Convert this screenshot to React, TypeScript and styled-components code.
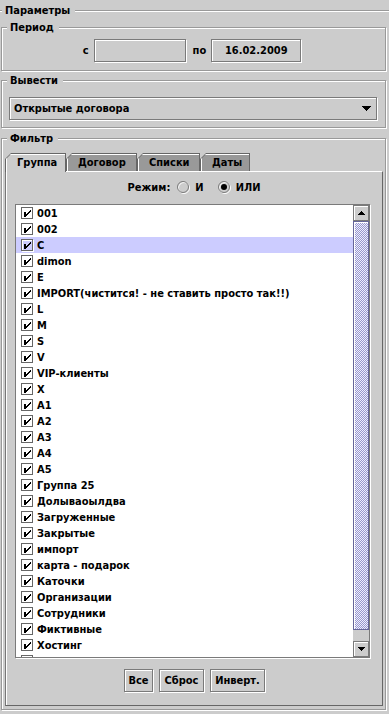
import React from "react";
import styled, { createGlobalStyle, css } from "styled-components";

const GlobalStyle = createGlobalStyle`
  html, body { margin: 0; padding: 0; background: #cccccc; }
  #root { width: 389px; height: 714px; }
`;

const flush3d = css`
  border: 1px solid #7a7a7a;
  box-shadow: inset 1px 1px 0 #ffffff, 1px 1px 0 #ffffff;
`;

const etched = css`
  border: 1px solid #999999;
  box-shadow: inset 1px 1px 0 #ffffff, 1px 1px 0 #ffffff;
`;

const Window = styled.div`
  box-sizing: border-box;
  width: 389px;
  height: 714px;
  padding-top: 4px;
  background: #cccccc;
  color: #000000;
  font: bold 11px "DejaVu Sans Condensed", "DejaVu Sans", "Liberation Sans", sans-serif;
  overflow: hidden;
`;

const Params = styled.fieldset`
  margin: 0;
  padding: 0;
  min-width: 0;
  border: none;
  border-top: 1px solid #999999;
  box-shadow: inset 0 1px 0 #ffffff;
`;

const Legend = styled.legend<{ $indent: number }>`
  margin-left: ${(p) => p.$indent}px;
  padding: 0 5px 0 3px;
  line-height: 13px;
  background: #cccccc;
  white-space: nowrap;
`;

const Group = styled.fieldset<{ $top: number }>`
  box-sizing: border-box;
  width: 385px;
  min-width: 0;
  margin: ${(p) => p.$top}px 0 0 1px;
  padding: 0;
  ${etched}
`;

const PeriodRow = styled.div`
  display: flex;
  justify-content: center;
  align-items: center;
  gap: 5px;
  padding: 5px 3px 8px 0;
`;

const Caption = styled.span<{ $gap?: number }>`
  margin-left: ${(p) => p.$gap ?? 0}px;
`;

const DateField = styled.div<{ $width: number }>`
  box-sizing: border-box;
  width: ${(p) => p.$width}px;
  height: 23px;
  display: flex;
  align-items: center;
  justify-content: center;
  background: #cccccc;
  ${flush3d}
`;

const OutputBody = styled.div`
  padding: 10px 8px 7px 7px;
`;

const Combo = styled.div`
  box-sizing: border-box;
  height: 23px;
  display: flex;
  align-items: center;
  justify-content: space-between;
  padding: 0 5px 0 4px;
  background: #cccccc;
  ${flush3d}
`;

const FilterBody = styled.div`
  padding: 8px 2px 3px 3px;
`;

const TabStrip = styled.div`
  display: flex;
  align-items: flex-start;
  height: 18px;
`;

const TabEdge = styled.div<{ $selected: boolean; $width: number }>`
  position: relative;
  z-index: ${(p) => (p.$selected ? 1 : 0)};
  box-sizing: border-box;
  width: ${(p) => p.$width}px;
  height: ${(p) => (p.$selected ? 19 : 18)}px;
  padding: 1px 1px 0 1px;
  background: #666666;
  clip-path: polygon(0 100%, 0 6px, 6px 0, 100% 0, 100% 100%);
`;

const TabFace = styled.div<{ $selected: boolean }>`
  height: 100%;
  display: flex;
  align-items: center;
  padding: 0 0 ${(p) => (p.$selected ? 1 : 0)}px 11px;
  box-sizing: border-box;
  background: ${(p) => (p.$selected ? "#cccccc" : "#999999")};
  box-shadow: inset 1px 1px 0 #ffffff;
  clip-path: polygon(0 100%, 0 5px, 5px 0, 100% 0, 100% 100%);
`;

const TabPanel = styled.div`
  box-sizing: border-box;
  border-top: 1px solid #ffffff;
  border-left: 1px solid #777777;
  border-right: 1px solid #666666;
  border-bottom: 1px solid #666666;
  box-shadow: inset 1px 0 0 #ffffff;
  padding-bottom: 13px;
`;

const ModeRow = styled.div`
  display: flex;
  justify-content: center;
  align-items: center;
  height: 13px;
  margin: 9px 0 10px;
`;

const RadioItem = styled.label<{ $gap: number }>`
  display: flex;
  align-items: center;
  gap: 5px;
  margin-left: ${(p) => p.$gap}px;
`;

const List = styled.div`
  box-sizing: border-box;
  height: 454px;
  margin: 0 12px 0 9px;
  display: flex;
  background: #ffffff;
  ${flush3d}
  box-shadow: 1px 1px 0 #ffffff;
`;

const Items = styled.div`
  flex: 1;
  overflow: hidden;
`;

const Item = styled.div<{ $selected?: boolean }>`
  display: flex;
  align-items: center;
  gap: 3px;
  height: 16px;
  padding-left: 5px;
  white-space: nowrap;
  background: ${(p) => (p.$selected ? "#ccccff" : "transparent")};
`;

const ScrollBar = styled.div`
  width: 16px;
  display: flex;
  flex-direction: column;
  background: #cccccc;
`;

const ScrollButton = styled.div`
  box-sizing: border-box;
  height: 16px;
  flex: none;
  display: flex;
  align-items: center;
  justify-content: center;
  background: #cccccc;
  border: 1px solid #7a7a7a;
  box-shadow: inset 1px 1px 0 #ffffff;
`;

const Track = styled.div`
  flex: 1;
  background: #cccccc;
`;

const Thumb = styled.div`
  box-sizing: border-box;
  border: 1px solid #666699;
  box-shadow: inset 1px 1px 0 #ffffff;
  background-color: #ccccff;
  background-image: repeating-conic-gradient(#9999cc 0 25%, #eeeeff 0 50%);
  background-size: 2px 2px;
`;

const ButtonRow = styled.div`
  display: flex;
  justify-content: center;
  gap: 6px;
  margin-top: 11px;
  padding-left: 1px;
`;

const Button = styled.div<{ $width: number }>`
  box-sizing: border-box;
  width: ${(p) => p.$width}px;
  height: 23px;
  display: flex;
  align-items: center;
  justify-content: center;
  background: #cccccc;
  ${flush3d}
`;

const items = [
  "001",
  "002",
  "C",
  "dimon",
  "E",
  "IMPORT(чистится! - не ставить просто так!!)",
  "L",
  "M",
  "S",
  "V",
  "VIP-клиенты",
  "X",
  "А1",
  "А2",
  "А3",
  "А4",
  "А5",
  "Группа 25",
  "Долываоылдва",
  "Загруженные",
  "Закрытые",
  "импорт",
  "карта - подарок",
  "Каточки",
  "Организации",
  "Сотрудники",
  "Фиктивные",
  "Хостинг",
];

// one more row lies below the visible area; only its top edge shows
const totalRows = items.length + 1;

const tabs = [
  { label: "Группа", width: 61 },
  { label: "Договор", width: 71 },
  { label: "Списки", width: 63 },
  { label: "Даты", width: 50 },
];

const CheckIcon = () => (
  <svg width="13" height="13" viewBox="0 0 13 13" shapeRendering="crispEdges">
    <rect x="1.5" y="1.5" width="11" height="11" fill="none" stroke="#ffffff" />
    <rect x="0.5" y="0.5" width="11" height="11" fill="none" stroke="#666666" />
    <rect x="3" y="5" width="2" height="5" fill="#000000" />
    <polygon
      points="10,3 9,3 9,4 8,4 8,5 7,5 7,6 6,6 6,7 5,7 5,9 6,9 6,8 7,8 7,7 8,7 8,6 9,6 9,5 10,5"
      fill="#000000"
    />
  </svg>
);

const RadioIcon = ({ on }: { on: boolean }) => (
  <svg width="13" height="13" viewBox="0 0 13 13">
    <circle cx="7" cy="7" r="5.5" fill="none" stroke="#ffffff" />
    <circle cx="6" cy="6" r="5.5" fill="none" stroke="#7a7a7a" />
    {on && <circle cx="6" cy="6" r="3" fill="#000000" />}
  </svg>
);

const Arrow = ({ up, width = 7 }: { up?: boolean; width?: number }) => {
  const h = Math.ceil(width / 2);
  return (
    <svg width={width} height={h} viewBox={`0 0 ${width} ${h}`} shapeRendering="crispEdges">
      <polygon
        points={up ? `${width / 2},0 ${width},${h} 0,${h}` : `0,0 ${width},0 ${width / 2},${h}`}
        fill="#000000"
      />
    </svg>
  );
};

const App = () => {
  const visibleHeight = 452;
  const trackHeight = visibleHeight - 32;
  const thumbHeight = Math.round((trackHeight * visibleHeight) / (totalRows * 16));

  return (
    <>
      <GlobalStyle />
      <Window>
        <Params>
          <Legend $indent={2}>Параметры</Legend>

          <Group $top={4}>
            <Legend $indent={5}>Период</Legend>
            <PeriodRow>
              <Caption>с</Caption>
              <DateField $width={92} />
              <Caption $gap={2}>по</Caption>
              <DateField $width={90}>16.02.2009</DateField>
            </PeriodRow>
          </Group>

          <Group $top={3}>
            <Legend $indent={5}>Вывести</Legend>
            <OutputBody>
              <Combo>
                <span>Открытые договора</span>
                <Arrow width={9} />
              </Combo>
            </OutputBody>
          </Group>

          <Group $top={4}>
            <Legend $indent={5}>Фильтр</Legend>
            <FilterBody>
              <TabStrip>
                {tabs.map((t, i) => (
                  <TabEdge key={t.label} $selected={i === 0} $width={t.width}>
                    <TabFace $selected={i === 0}>{t.label}</TabFace>
                  </TabEdge>
                ))}
              </TabStrip>
              <TabPanel>
                <ModeRow>
                  <span>Режим:</span>
                  <RadioItem $gap={7}>
                    <RadioIcon on={false} />И
                  </RadioItem>
                  <RadioItem $gap={14}>
                    <RadioIcon on={true} />
                    ИЛИ
                  </RadioItem>
                </ModeRow>
                <List>
                  <Items>
                    {items.map((name) => (
                      <Item key={name} $selected={name === "C"}>
                        <CheckIcon />
                        {name}
                      </Item>
                    ))}
                    <Item>
                      <CheckIcon />
                    </Item>
                  </Items>
                  <ScrollBar>
                    <ScrollButton>
                      <Arrow up />
                    </ScrollButton>
                    <Track>
                      <Thumb style={{ height: thumbHeight }} />
                    </Track>
                    <ScrollButton>
                      <Arrow />
                    </ScrollButton>
                  </ScrollBar>
                </List>
                <ButtonRow>
                  <Button $width={29}>Все</Button>
                  <Button $width={45}>Сброс</Button>
                  <Button $width={55}>Инверт.</Button>
                </ButtonRow>
              </TabPanel>
            </FilterBody>
          </Group>
        </Params>
      </Window>
    </>
  );
};

export default App;
